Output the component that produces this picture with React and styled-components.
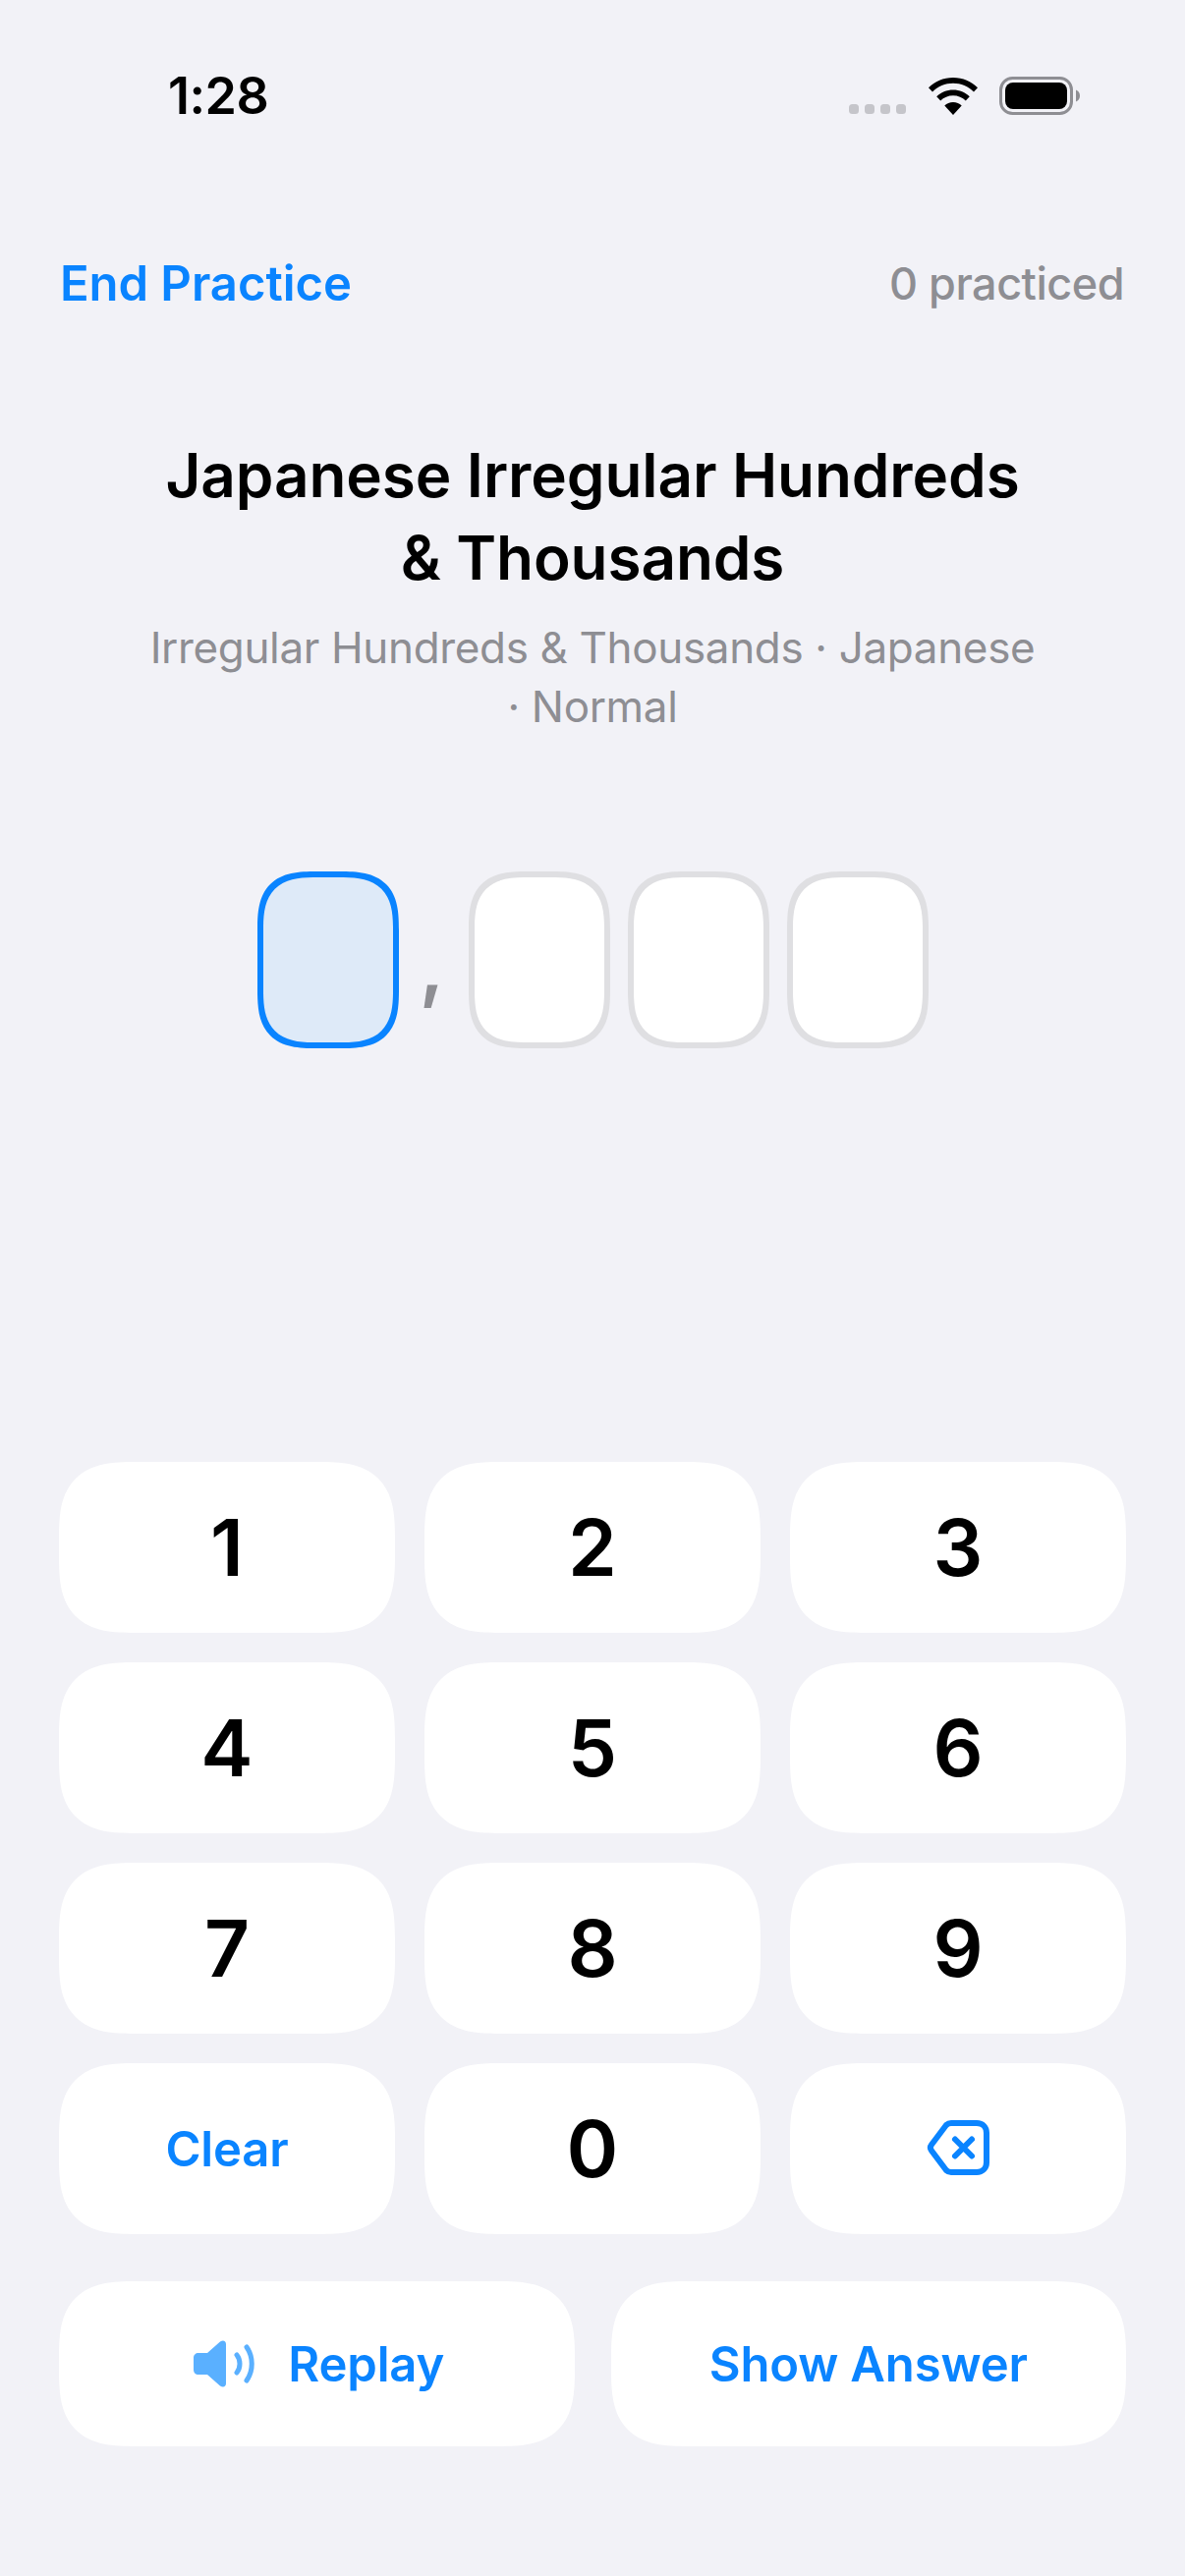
import React from "react";
import styled, { createGlobalStyle } from "styled-components";

const Global = createGlobalStyle`
  html, body { margin: 0; padding: 0; background: #f2f2f7; }
  * { box-sizing: border-box; }
`;

const BLUE = "#0a84ff";
const font = `Inter, "Liberation Sans", sans-serif`;

const Page = styled.div`
  width: 1206px;
  height: 2622px;
  background: #f2f2f7;
  font-family: ${font};
  display: flex;
  flex-direction: column;
  overflow: hidden;
`;
const StatusBar = styled.div`
  height: 117px;
  padding: 78px 106px 0 171px;
  display: flex;
  justify-content: space-between;
  align-items: flex-end;
`;
const Time = styled.span`
  font-size: 52px;
  font-weight: 600;
  line-height: 39px;
  letter-spacing: -0.5px;
  color: #000;
`;
const StatusIcons = styled.div`
  display: flex;
  align-items: flex-end;
  height: 39px;
`;
const Signal = styled.div`
  display: flex;
  gap: 6px;
  margin-right: 22px;
  margin-bottom: 1px;
`;
const SignalDot = styled.i`
  width: 10px;
  height: 10px;
  border-radius: 3.5px;
  background: #c5c5ca;
`;
const Wifi = styled.svg`
  width: 52px;
  height: 38px;
  margin-right: 21px;
  display: block;
`;
const Battery = styled.svg`
  width: 83px;
  height: 39px;
  display: block;
`;
const NavBar = styled.div`
  margin-top: 141px;
  padding: 0 62px 0 61px;
  display: flex;
  justify-content: space-between;
  align-items: center;
  height: 60px;
`;
const NavLink = styled.span`
  font-size: 49px;
  font-weight: 560;
  color: ${BLUE};
  letter-spacing: -0.05px;
`;
const NavCount = styled.span`
  font-size: 45px;
  font-weight: 500;
  color: #8e8e93;
  letter-spacing: -0.5px;
`;
const Heading = styled.div`
  margin-top: 124px;
  text-align: center;
  padding: 0 100px;
`;
const Title = styled.div`
  font-size: 62px;
  font-weight: 600;
  line-height: 84px;
  color: #000;
  letter-spacing: -0.1px;
`;
const Subtitle = styled.div`
  margin-top: 19px;
  font-size: 44px;
  font-weight: 400;
  line-height: 60px;
  color: #8e8e93;
  letter-spacing: -0.35px;
`;
const Digits = styled.div`
  margin-top: 138px;
  display: flex;
  justify-content: center;
  gap: 18px;
  padding-left: 1px;
`;
const DigitBox = styled.div`
  width: 144px;
  height: 180px;
  border-radius: 60px;
  corner-shape: superellipse(1.5);
  border: 6px solid ${(p) => (p.$active ? BLUE : "#dfdfe2")};
  background: ${(p) => (p.$active ? "#deeaf8" : "#fff")};
`;
const Separator = styled.span`
  width: 35px;
  text-align: center;
  font-size: 80px;
  font-weight: 600;
  color: #8e8e93;
  line-height: 180px;
  padding: 5px 4px 0 0;
`;
const Keys = styled.div`
  margin-top: auto;
  padding: 0 60px 132px;
  display: flex;
  flex-direction: column;
`;
const KeyGrid = styled.div`
  display: grid;
  grid-template-columns: repeat(3, 342px);
  grid-auto-rows: 174px;
  gap: 30px;
`;
const Key = styled.div`
  background: #fff;
  border-radius: 78px;
  corner-shape: superellipse(1.5);
  display: flex;
  align-items: center;
  justify-content: center;
  color: #000;
  font-size: 80px;
  font-weight: 560;
  padding-bottom: 2px;
`;
const TextKey = styled(Key)`
  color: ${BLUE};
  font-size: 49px;
  font-weight: 560;
  letter-spacing: -0.15px;
  padding-bottom: 0;
`;
const ActionRow = styled.div`
  margin-top: 48px;
  display: grid;
  grid-template-columns: 1fr 1fr;
  gap: 37px;
`;
const ActionKey = styled(TextKey)`
  height: 168px;
  gap: 33px;
  padding-left: ${(p) => (p.$nudge ? "5px" : "0")};
`;
const BackIcon = styled.svg`
  width: 64px;
  height: 56px;
  display: block;
`;
const SpeakerIcon = styled.svg`
  width: 63px;
  height: 48px;
  display: block;
`;

const App = () => (
  <Page>
    <Global />
    <StatusBar>
      <Time>1:28</Time>
      <StatusIcons>
        <Signal>
          <SignalDot /><SignalDot /><SignalDot /><SignalDot />
        </Signal>
        <Wifi viewBox="0 0 52 38">
          <path d="M26 0C16 0 7.500 3.900 1 10.200L5 14.400C10.500 9 17.800 5.800 26 5.800S41.500 9 47 14.400L51 10.200C44.500 3.900 36 0 26 0Z" fill="#000" />
          <path d="M26 12.500C19.500 12.500 13.500 15.100 9.200 19.300L13.200 23.500C16.500 20.300 21 18.300 26 18.300S35.500 20.300 38.800 23.500L42.800 19.300C38.500 15.100 32.500 12.500 26 12.500Z" fill="#000" />
          <path d="M26 25C22.600 25 19.500 26.300 17.300 28.500L26 38L34.700 28.500C32.500 26.300 29.400 25 26 25Z" fill="#000" />
        </Wifi>
        <Battery viewBox="0 0 83 39">
          <rect x="1.500" y="1.500" width="72" height="36" rx="12" fill="none" stroke="#8e8e93" strokeWidth="3" />
          <rect x="6" y="6" width="63" height="27" rx="8" fill="#000" />
          <path d="M78 13.500C80.500 14.500 82 16.800 82 19.500S80.500 24.500 78 25.500Z" fill="#8e8e93" />
        </Battery>
      </StatusIcons>
    </StatusBar>
    <NavBar>
      <NavLink>End Practice</NavLink>
      <NavCount>0 practiced</NavCount>
    </NavBar>
    <Heading>
      <Title>Japanese Irregular Hundreds<br />&amp; Thousands</Title>
      <Subtitle>Irregular Hundreds &amp; Thousands · Japanese<br />· Normal</Subtitle>
    </Heading>
    <Digits>
      <DigitBox $active />
      <Separator>,</Separator>
      <DigitBox />
      <DigitBox />
      <DigitBox />
    </Digits>
    <Keys>
      <KeyGrid>
        {["1", "2", "3", "4", "5", "6", "7", "8", "9"].map((d) => (
          <Key key={d}>{d}</Key>
        ))}
        <TextKey>Clear</TextKey>
        <Key>0</Key>
        <Key>
          <BackIcon viewBox="0 0 64 56" fill="none" stroke={BLUE} strokeWidth="6" strokeLinecap="round" strokeLinejoin="round">
            <path d="M25 3H51C57 3 61 7 61 13V43C61 49 57 53 51 53H25C23 53 21.500 52.400 20 51L5 31C3.500 29 3.500 27 5 25L20 5C21.500 3.600 23 3 25 3Z" />
            <path d="M29 19.500L46 36.500M46 19.500L29 36.500" />
          </BackIcon>
        </Key>
      </KeyGrid>
      <ActionRow>
        <ActionKey $nudge>
          <SpeakerIcon viewBox="0 0 63 48">
            <path d="M5 13H14L27 1.500C30 -0.500 33 0.500 33 4V44C33 47.500 30 48.500 27 46.500L14 35H5C2 35 0 33 0 30V18C0 15 2 13 5 13Z" fill="#5ab0ff" />
            <path d="M44 15C48 20 48 28 44 33M54 7C61 17 61 31 54 41" fill="none" stroke="#5ab0ff" strokeWidth="5" strokeLinecap="round" />
          </SpeakerIcon>
          <span>Replay</span>
        </ActionKey>
        <ActionKey>Show Answer</ActionKey>
      </ActionRow>
    </Keys>
  </Page>
);

export default App;
